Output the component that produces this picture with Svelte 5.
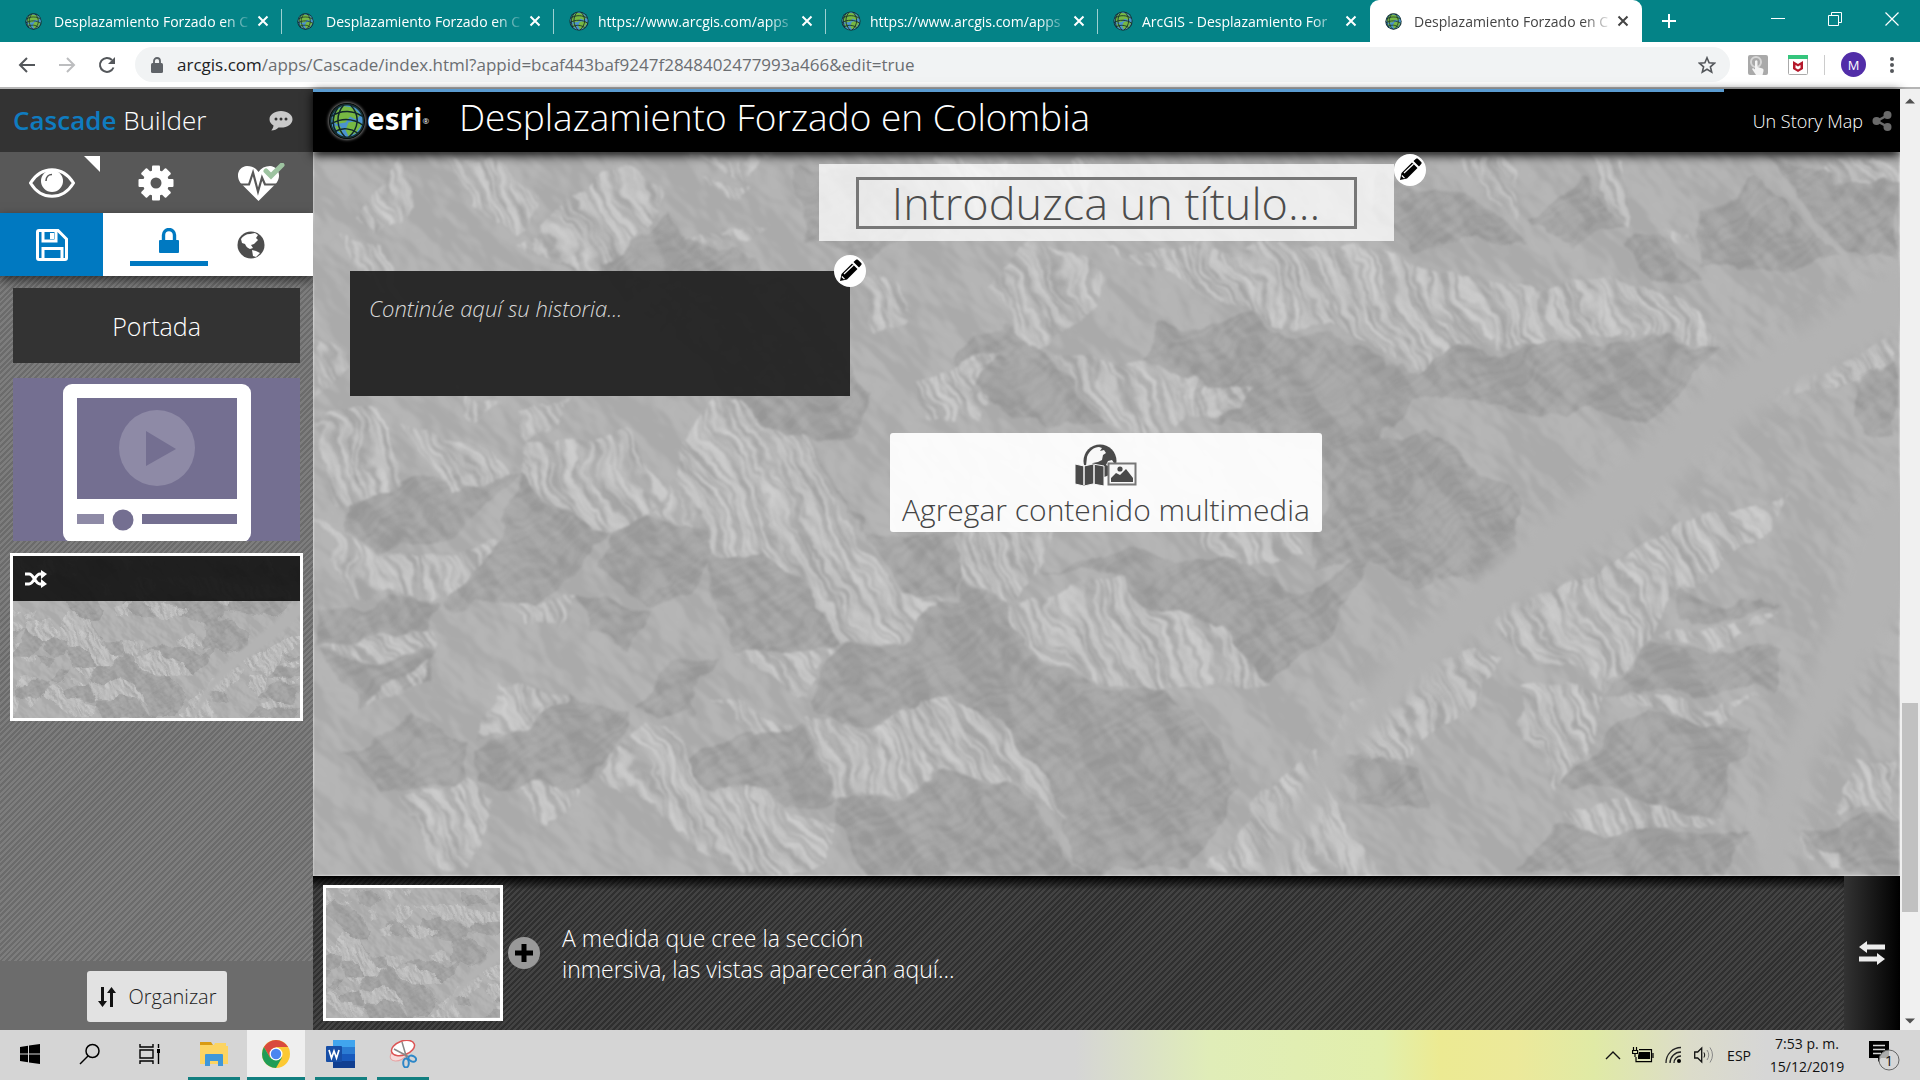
<script>
  const tabs = [
    { title: 'Desplazamiento Forzado en C', small: true },
    { title: 'Desplazamiento Forzado en C', small: true },
    { title: 'https://www.arcgis.com/apps' },
    { title: 'https://www.arcgis.com/apps' },
    { title: 'ArcGIS - Desplazamiento For' },
    { title: 'Desplazamiento Forzado en C', small: true, active: true },
  ];

  // Sunlit slopes of the relief map
  const lights = [
    '790,90 1000,95 1064,103 1135,125 1230,140 1290,126 1340,138 1372,155 1415,190 1340,190 1290,181 1232,190 1170,188 1145,200 1105,222 1075,205 1020,178 941,158 880,140 847,123',
    '674,131 720,95 797,131 790,158 732,191 703,171',
    '739,198 833,218 941,231 920,258 847,281 783,271',
    '127,5 170,1 235,41 213,85 156,58',
    '213,98 249,51 314,18 350,41 314,98 278,118',
    '19,85 69,95 98,158 60,130', '40,65 83,8 105,58 62,78',
    '365,5 487,1 430,22', '386,30 440,30 420,42', '379,78 458,81 422,95',
    '0,185 26,205 33,221 0,241', '0,270 60,260 90,330 20,350',
    '83,268 127,275 206,318 141,348', '141,245 170,271 190,250',
    '206,265 264,243 213,292', '540,120 590,130 600,165 560,180',
    '600,225 690,200 650,275 610,270',
    '214,291 286,291 306,281 347,335 339,361 306,378 281,381 235,341 209,321',
    '398,251 434,251 449,275 495,285 520,341 551,391 587,435 628,455 587,488 531,496 505,448 449,391 406,400 378,375 342,358 352,328',
    '0,368 31,391 66,411 122,401 184,391 179,411 133,446 77,446 41,435 20,405',
    '5,491 128,475 122,495 61,513', '638,381 735,381 735,418 699,455 645,425',
    '809,431 891,478 963,530 901,528 840,533 788,528 755,525 706,475 699,458 740,440',
    '628,541 653,548 699,578 724,615 755,671 709,638 622,618 587,638 531,640 510,601 485,561 541,585',
    '418,498 531,498 485,545', '398,548 480,568 439,581',
    '332,575 352,575 372,608 393,638 459,641 525,671 500,721 423,721 367,681 286,618',
    '92,645 153,628 184,645 148,715 122,708', '204,638 265,635 240,685',
    '189,451 265,448 250,475 200,470', '185,535 250,542 215,580 175,585',
    '40,560 112,515 100,545', '602,251 684,248 673,275', '880,378 935,345 970,370 1000,405 925,412',
    '1179,468 1282,415 1374,368 1477,341 1425,408 1374,435 1343,488 1297,541 1240,515',
    '1158,495 1189,508 1107,601 1066,615 1014,601 1045,548',
    '1004,601 1025,661 1066,721 901,721 953,645', '1374,475 1467,455 1405,491 1353,485',
    '1312,545 1415,555 1456,548 1384,571 1322,561',
    '1251,655 1333,648 1415,661 1333,683 1261,675',
    '1538,605 1585,611 1580,665 1518,658', '1487,685 1528,701 1538,724 1497,705',
    '1209,530 1297,545 1271,595 1240,641 1200,575',
    '1512,21 1558,5 1587,35 1524,30', '1466,245 1524,215 1587,185 1587,215 1531,238',
    '1351,75 1382,80 1385,94', '1150,8 1200,5 1208,70', '1275,10 1310,12 1318,80 1285,45',
    '620,5 690,10 660,60', '730,20 780,10 770,55',
  ];

  // Slopes in shadow
  const darks = [
    '941,160 1103,223 1145,200 1232,190 1415,192 1380,225 1320,270 1250,260 1105,245 1040,300 950,290 860,240 833,215 850,180',
    '213,98 278,120 340,170 420,248 440,285 540,280 560,240 500,170 470,130 350,60 314,98',
    '209,321 235,345 281,382 306,378 265,420 213,450 133,448 184,395',
    '339,363 378,375 405,400 380,445 330,455 295,420 306,378',
    '449,391 505,448 531,496 418,498 405,430 400,400',
    '645,428 699,458 735,510 755,528 800,535 860,533 930,640 880,724 770,724 720,610 690,570 640,540 560,575 530,580 490,550 531,498 587,490 628,455',
    '622,620 709,640 770,724 560,724 525,671 531,642 587,640',
    '265,448 330,460 315,500 280,490', '250,540 318,560 310,590 265,635 204,640 165,630 170,600',
    '5,495 61,515 122,498 110,540 40,560', '100,560 160,590 150,630 70,640 30,600',
    '485,570 531,642 500,650 393,638 372,608 430,580', '326,560 345,570 380,560 400,500 370,510',
    '40,320 130,330 209,321 150,370 66,409 20,380', '550,380 638,381 645,425 625,450 590,435 500,290',
    '1102,281 1140,300 1205,350 1210,400 1150,440 1060,410 1000,420 1010,290',
    '735,418 830,400 930,405 1000,440 1060,400 1020,480 960,527 890,478 809,431',
    '1217,65 1263,25 1313,78 1260,95', '1386,58 1443,28 1524,105 1390,118',
    '1313,92 1351,80 1390,128 1340,130', '1060,20 1160,40 1210,90 1100,105 1060,60',
    '1343,490 1467,495 1467,540 1300,545', '1300,570 1436,570 1415,658 1333,648 1251,628',
    '1240,672 1436,681 1415,724 1199,724', '1364,441 1467,450 1374,470',
    '1025,605 1107,618 1107,660 1045,650', '1487,678 1585,665 1587,724 1538,724',
    '1531,240 1587,215 1587,280 1560,275', '480,20 560,5 620,60 560,110 500,90',
    '703,173 732,192 783,271 690,260 640,200', '0,450 130,448 120,475 0,490', '1450,8 1512,22 1587,37 1587,110 1530,100',
  ];
</script>

{#snippet globe(size)}
  <svg width={size} height={size} viewBox="0 0 24 24" aria-hidden="true">
    <circle cx="12" cy="12" r="11.5" fill="#16302f" />
    <circle cx="12" cy="12" r="10.4" fill="#4b93cf" />
    <path d="M4 6l5-4 7 1 5 5-3 3-4-2-3 4-6 1-3-3zM13 13l6-1 3 2-4 6-5 2-2-4zM4 15l4 1 1 5-4-3z" fill="#77b843" />
    <g fill="none" stroke="#10262b" stroke-width="1">
      <path d="M10 1C4 8 5 17 11 23M14 1c7 7 6 16-1 22M1.500 9c7-5 15-4 21 0M1 14c7-4 15-4 22 1M4 19c5-3 11-2 15 1M6 3c-4 6-4 12-1 17" />
    </g>
  </svg>
{/snippet}

{#snippet pencil()}
  <svg width="24" height="24" viewBox="0 0 24 24" aria-hidden="true">
    <path d="M2 22l1.500-7L14 4.500 19.500 10 9 20.500z" /><path d="M15.500 3L18 .8c.6-.5 1.300-.5 1.900 0l3.300 3.300c.6.600.6 1.300 0 1.900L21 8.500z" />
    <path d="M3.800 17.500l2.700 2.700M6 15L15.500 6" stroke="#fff" stroke-width="1.200" fill="none" />
  </svg>
{/snippet}

{#snippet relief()}
  <svg class="relief" viewBox="0 0 1587 724" preserveAspectRatio="xMidYMid slice" aria-hidden="true"><use href="#relief-map" /></svg>
{/snippet}

<svg class="defs" width="0" height="0" aria-hidden="true">
  <defs>
    <filter id="ridge" x="0" y="0" width="1587" height="724" filterUnits="userSpaceOnUse" color-interpolation-filters="sRGB">
      <feTurbulence type="fractalNoise" baseFrequency="0.016" numOctaves="4" seed="4" result="n" />
      <feDisplacementMap in="SourceGraphic" in2="n" scale="38" xChannelSelector="R" yChannelSelector="G" result="d" />
      <feGaussianBlur in="d" stdDeviation="1" />
    </filter>
    <filter id="rock" x="-500" y="-500" width="2600" height="1900" filterUnits="userSpaceOnUse" color-interpolation-filters="sRGB">
      <feTurbulence type="fractalNoise" baseFrequency="0.009 0.016" numOctaves="4" seed="11" />
      <feDiffuseLighting surfaceScale="36" lighting-color="#fff"><feDistantLight azimuth="120" elevation="30" /></feDiffuseLighting>
      <feGaussianBlur stdDeviation="1" />
    </filter>
    <filter id="gully" x="-600" y="-700" width="2800" height="2200" filterUnits="userSpaceOnUse" color-interpolation-filters="sRGB">
      <feTurbulence type="fractalNoise" baseFrequency="0.012 0.07" numOctaves="3" seed="7" />
      <feDiffuseLighting surfaceScale="8" lighting-color="#fff"><feDistantLight azimuth="90" elevation="30" /></feDiffuseLighting>
    </filter>
    <filter id="soft"><feGaussianBlur stdDeviation="8" /></filter>
    <clipPath id="sunlit">
      {#each lights as points}<polygon {points} />{/each}
    </clipPath>
    <clipPath id="shaded">
      {#each darks as points}<polygon {points} />{/each}
    </clipPath>
    <clipPath id="frame"><rect width="1587" height="724" /></clipPath>
    <g id="relief-map" clip-path="url(#frame)">
      <g filter="url(#ridge)">
        <rect x="-60" y="-60" width="1707" height="844" fill="#b0b0b0" />
        <g fill="#a4a4a4">{#each darks as points}<polygon {points} />{/each}</g>
        <g fill="#c3c3c3">{#each lights as points}<polygon {points} />{/each}</g>
        <g clip-path="url(#shaded)"><g class="faint">
          <g transform="rotate(150 800 360)"><rect x="-600" y="-700" width="2800" height="2200" filter="url(#gully)" /></g>
        </g></g>
        <g clip-path="url(#sunlit)"><g class="gullies">
          <g transform="rotate(62 800 360)"><rect x="-600" y="-700" width="2800" height="2200" filter="url(#gully)" /></g>
        </g></g>
      </g>
      <g class="rocks"><g transform="rotate(40 800 360)"><rect x="-500" y="-500" width="2600" height="1900" filter="url(#rock)" /></g></g>
      <g fill="#b3b3b3" filter="url(#soft)">
        <path d="M1600 100L1500 170 1415 215 1330 290 1210 385 1100 480 1020 580 940 730H960L1040 600 1160 485 1330 365 1430 270 1600 170z" />
        <path d="M1600 310L1550 370 1500 520 1460 620 1440 730H1470L1500 610 1560 500 1600 440z" />
      </g>
    </g>
  </defs>
</svg>

<div class="screen">
  <header class="tabs">
    <nav class="tablist" aria-label="Pestañas">
      {#each tabs as tab}
        <div class="tab" class:active={tab.active}>
          <span class="fav">{@render globe(tab.small ? 17 : 20)}</span>
          <a href="#main" class="tab-title">{tab.title}</a>
          <button class="x" aria-label="Cerrar pestaña">
            <svg width="12" height="12" viewBox="0 0 12 12"><path d="M1.500 1.500l9 9m0-9l-9 9" stroke="currentColor" stroke-width="2" /></svg>
          </button>
        </div>
      {/each}
      <button class="newtab" aria-label="Nueva pestaña">
        <svg width="16" height="16" viewBox="0 0 16 16"><path d="M8 1v14M1 8h14" stroke="#fff" stroke-width="2" /></svg>
      </button>
    </nav>
    <div class="win">
      <button aria-label="Minimizar"><svg width="14" height="14" viewBox="0 0 14 14"><path d="M0 6.500h14" stroke="#fff" /></svg></button>
      <button aria-label="Restaurar"><svg width="14" height="14" viewBox="0 0 14 14" fill="none" stroke="#fff"><path d="M.5 3.500h10v10H.5zM3.500 3V.5h10v10H11" /></svg></button>
      <button aria-label="Cerrar"><svg width="14" height="14" viewBox="0 0 14 14"><path d="M.5.5l13 13m0-13l-13 13" stroke="#fff" stroke-width="1.200" /></svg></button>
    </div>
  </header>

  <div class="toolbar">
    <button aria-label="Atrás"><svg width="18" height="18" viewBox="0 0 18 18" fill="none" stroke="#54575b" stroke-width="2"><path d="M17 9H2M9 2L2 9l7 7" /></svg></button>
    <button aria-label="Adelante"><svg width="18" height="18" viewBox="0 0 18 18" fill="none" stroke="#bcbdbf" stroke-width="2"><path d="M1 9h15M9 2l7 7-7 7" /></svg></button>
    <button aria-label="Recargar"><svg width="18" height="18" viewBox="0 0 18 18"><path d="M15.500 11.500A7 7 0 1 1 14 4" fill="none" stroke="#54575b" stroke-width="2" /><path d="M17 1v7h-7z" fill="#54575b" /></svg></button>
    <div class="omni">
      <svg width="12" height="16" viewBox="0 0 12 16"><rect y="6" width="12" height="10" rx="1.500" fill="#5f6368" /><path d="M3 7V4a3 3 0 0 1 6 0v3" fill="none" stroke="#5f6368" stroke-width="1.800" /></svg>
      <a href="#main" class="url"><b>arcgis.com</b>/apps/Cascade/index.html?appid=bcaf443baf9247f2848402477993a466&amp;edit=true</a>
      <button class="star" aria-label="Marcador"><svg width="18" height="18" viewBox="0 0 18 18"><path d="M9 1.800l2.100 5 5.400.4-4.100 3.600 1.300 5.300L9 13.300l-4.700 2.800 1.300-5.300L1.500 7.200l5.400-.4z" fill="none" stroke="#54575b" stroke-width="1.600" /></svg></button>
    </div>
    <div class="exts">
      <button aria-label="Extensión táctil"><svg width="20" height="20" viewBox="0 0 20 20"><rect width="20" height="20" rx="2" fill="#a9a9a9" /><circle cx="8" cy="7" r="5" fill="none" stroke="#d6d6d6" stroke-width="2" /><path d="M7 6q1.500-1.500 2.500 0v6l5 1.500q1.500.5 1 2.500l-1 4H8l-4-6 1-1 2 1.500z" fill="#f4f4f4" /></svg></button>
      <button aria-label="McAfee"><svg width="20" height="20" viewBox="0 0 20 20"><rect x=".5" y=".5" width="19" height="19" rx="1" fill="#fff" stroke="#aaa" /><path d="M0 0h20v4H0z" fill="#35c57d" /><path d="M5 6l5 3 5-3v8l-5 3-5-3zM7.500 10v3l2.500 1.500 2.500-1.500v-3L10 11.500z" fill="#b5182b" fill-rule="evenodd" /></svg></button>
      <i></i>
      <button class="avatar" aria-label="Perfil">M</button>
      <button aria-label="Menú"><svg width="4" height="18" viewBox="0 0 4 18" fill="#54575b"><circle cx="2" cy="3" r="2" /><circle cx="2" cy="9" r="2" /><circle cx="2" cy="15" r="2" /></svg></button>
    </div>
  </div>

  <div class="app">
    <aside>
      <div class="brand">
        <h2><b>Cascade</b> Builder</h2>
        <button aria-label="Comentarios"><svg width="24" height="22" viewBox="0 0 24 22"><path d="M12 1C5.500 1 .5 4.700.5 9.300c0 2.700 1.500 4.800 4 6.300-.2 2-1 3.600-2.200 4.800 3 0 5.500-1.200 7.200-3 .8.100 1.600.2 2.500.2 6.500 0 11.500-3.700 11.500-8.300S18.500 1 12 1z" fill="#c9c9c9" /><g fill="#333"><circle cx="7" cy="9" r="1.500" /><circle cx="12" cy="9" r="1.500" /><circle cx="17" cy="9" r="1.500" /></g></svg></button>
      </div>
      <div class="tools">
        <button aria-label="Vista previa">
          <svg width="46" height="30" viewBox="0 0 46 30"><path d="M1.500 15C7 6 14 1.700 23 1.700S39 6 44.500 15C39 24 32 28.300 23 28.300S7 24 1.500 15z" fill="none" stroke="#fff" stroke-width="3" /><circle cx="23" cy="13" r="11" fill="#fff" /><path d="M17 13c0-4 2.500-6.500 6-6.500" fill="none" stroke="#585858" stroke-width="1.600" /></svg>
          <svg class="corner" width="16" height="16" viewBox="0 0 16 16"><path d="M0 0h16v16z" fill="#fff" /></svg>
        </button>
        <button aria-label="Configuración">
          <svg width="36" height="36" viewBox="-18 -18 36 36"><g fill="#fff">{#each [0, 45, 90, 135] as a}<rect x="-4" y="-17.500" width="8" height="35" rx="1" transform="rotate({a})" />{/each}<circle r="13" /></g><circle r="5.500" fill="#585858" /></svg>
        </button>
        <button aria-label="Estado">
          <svg width="50" height="40" viewBox="0 0 50 40"><path d="M22.500 38L4.500 20C-1 12 3 3.500 11 3c5 0 9 2 11.500 6C25 5 29 3 34 3c8 .5 12 9 6.500 17z" fill="#fff" /><path d="M2 21.500h11l4-12 5 19 4-14 3 7h13" fill="none" stroke="#585858" stroke-width="2.200" /><path d="M30 8l5 5L46 2" fill="none" stroke="#9dc3a0" stroke-width="5" stroke-linecap="round" /></svg>
        </button>
      </div>
      <div class="share">
        <button class="save" aria-label="Guardar"><svg width="32" height="32" viewBox="0 0 32 32" fill="none" stroke="#fff" stroke-width="3"><path d="M3 1.500h19L30.500 10v19q0 1.500-1.500 1.500H3Q1.500 30.500 1.500 29V3Q1.500 1.500 3 1.500z" /><path d="M7 30V19.500h19V30M7 2v10h13V2" /><path d="M16 4v6" stroke-width="4" /></svg></button>
        <button class="lock" aria-label="Privado"><svg width="20" height="26" viewBox="0 0 20 26"><rect y="12" width="20" height="13" rx="1" fill="#0079c1" /><path d="M4.500 13V7a5.500 5.500 0 0 1 11 0v6" fill="none" stroke="#0079c1" stroke-width="3.400" /></svg></button>
        <button class="world" aria-label="Público"><svg width="28" height="28" viewBox="0 0 28 28"><circle cx="14" cy="14" r="13.500" fill="#4d4d4d" /><path d="M4 8c2-3 5-5 9-5l5-1 3 2-2 3 2 2-4 4-3 1 2 3-3 1c-3-1-4-3-5-5l-3-1zM15 19l4 1 4 2-4 4-3-1z" fill="#fff" /></svg></button>
      </div>
      <div class="sections">
        <button class="cover">Portada</button>
        <button class="video" aria-label="Sección de vídeo">
          <svg viewBox="0 0 287 163"><rect width="287" height="163" fill="#746f91" /><rect x="50" y="6" width="188" height="158" rx="9" fill="#fff" /><path d="M64 20h160v101H64z" fill="#746f91" /><circle cx="144" cy="70" r="38" fill="#8e8aa6" /><path d="M133 53v35l30-17z" fill="#746f91" /><path d="M64 136h27v10H64z" fill="#8e8aa6" /><path d="M129 136h95v10h-95z" fill="#746f91" /><circle cx="110" cy="142" r="10.500" fill="#746f91" /></svg>
        </button>
        <button class="immersive" aria-label="Sección inmersiva">
          {@render relief()}
          <span><svg width="22" height="18" viewBox="0 0 22 18" fill="none" stroke="#fff" stroke-width="3"><path d="M0 4h4c5 0 6 10 11 10h2M0 14h4c5 0 6-10 11-10h2" /><path d="M16 0l6 4-6 5zM16 9l6 5-6 4z" fill="#fff" stroke="none" /></svg></span>
        </button>
      </div>
      <div class="organize">
        <button><svg width="20" height="22" viewBox="0 0 20 22" fill="#111"><path d="M4 1h3v14h3l-4.500 6L1 15h3zM13 21h3V7h3l-4.500-6L10 7h3z" /></svg>Organizar</button>
      </div>
    </aside>

    <main id="main">
      <div class="bar">
        <a href="#main" class="esri" aria-label="esri">{@render globe(36)}<b>esri</b><sup>®</sup></a>
        <h1>Desplazamiento Forzado en Colombia</h1>
        <a href="#main" class="story-link">Un Story Map</a>
        <button aria-label="Compartir"><svg width="20" height="20" viewBox="0 0 20 20" fill="#6a6a6a"><path d="M16 4L5 10l11 6" fill="none" stroke="#6a6a6a" stroke-width="2.500" /><circle cx="15.500" cy="4" r="4" /><circle cx="4.500" cy="10" r="4" /><circle cx="15.500" cy="16" r="4" /></svg></button>
      </div>
      <section class="stage">
        {@render relief()}
        <div class="content">
          <div class="title-box">
            <input aria-label="Título" placeholder="Introduzca un título..." />
            <button class="edit" aria-label="Editar título">{@render pencil()}</button>
          </div>
          <div class="story">
            <textarea aria-label="Historia" placeholder="Continúe aquí su historia..."></textarea>
            <button class="edit" aria-label="Editar historia">{@render pencil()}</button>
          </div>
          <button class="media">
            <svg width="62" height="42" viewBox="0 0 62 42"><circle cx="25" cy="17" r="16.500" fill="#4a4a4a" /><path d="M12 13c2-6 7-10 12-10l3 1-2 3 4-1 2 3-3 2-1 5-4 2-5 1-3 3h-4zM33 17l4-1 2 3-4 4-4-2z" fill="#f8f8f8" /><path d="M0 20l9 2 9-2 11 2v20l-11-2-9 2-9-2z" fill="#4a4a4a" stroke="#f8f8f8" stroke-width="1" /><path d="M9 21v20M19 21v20" stroke="#f8f8f8" stroke-width="1.500" /><rect x="33.500" y="19.500" width="27" height="21" fill="#f8f8f8" stroke="#777" stroke-width="2" /><path d="M36 38v-4l5-5 4 2 6-6 7 9v4z" fill="#4a4a4a" /><circle cx="45" cy="25" r="2.600" fill="#4a4a4a" /></svg>
            Agregar contenido multimedia
          </button>
        </div>
      </section>
      <section class="views">
        <button class="thumb" aria-label="Vista 1">{@render relief()}</button>
        <button class="add" aria-label="Agregar vista"><svg width="18" height="18" viewBox="0 0 18 18"><path d="M9 0v18M0 9h18" stroke="#000" stroke-width="5" /></svg></button>
        <p>A medida que cree la sección<br />inmersiva, las vistas aparecerán aquí...</p>
        <button class="swap" aria-label="Cambiar orden"><svg width="26" height="26" viewBox="0 0 26 26" fill="#ececec"><path d="M0 7l8-6v3.500h18v5H8V13zM26 19l-8-6v3.500H0v5h18V25z" /></svg></button>
      </section>
    </main>

    <div class="scroll" aria-hidden="true">
      <svg width="10" height="6" viewBox="0 0 10 6"><path d="M0 5.500L5 .5l5 5z" fill="#505050" /></svg>
      <div class="track"><i></i></div>
      <svg width="10" height="6" viewBox="0 0 10 6"><path d="M0 .5l5 5 5-5z" fill="#505050" /></svg>
    </div>
  </div>

  <footer>
    <div class="apps">
      <button class="plain" aria-label="Inicio"><svg width="20" height="20" viewBox="0 0 20 20"><path d="M0 3l8-1.200V9.500H0zM9 1.600L20 0v9.500H9zM0 10.500h8v7.700L0 17zM9 10.500h11V20L9 18.400z" /></svg></button>
      <button class="plain" aria-label="Buscar"><svg width="22" height="22" viewBox="0 0 22 22" fill="none" stroke="#000" stroke-width="1.500"><circle cx="13.500" cy="8" r="6.500" /><path d="M9 13l-8 8" /></svg></button>
      <button class="plain" aria-label="Vista de tareas"><svg width="22" height="20" viewBox="0 0 22 20" fill="none" stroke="#000" stroke-width="1.400"><path d="M1 0v3h13V0M1 20v-3h13v3M1 6h13v8H1zM19.500 0v4M19.500 9v11" /><path d="M19.500 5v4" stroke-width="3" /></svg></button>
      <button aria-label="Explorador"><svg width="28" height="26" viewBox="0 0 28 26"><path d="M0 1h11l2 3H0z" fill="#d99b12" /><path d="M0 4h14l1-2h11v3h2v18H0z" fill="#fcd462" /><path d="M5 25V14q0-1 1-1h16q1 0 1 1v11h-5v-5h-8v5z" fill="#3f97d9" /></svg></button>
      <button class="current" aria-label="Chrome"><svg width="28" height="28" viewBox="-14 -14 28 28"><circle r="14" fill="#fcc934" /><path d="M-12.100-7A14 14 0 0 1 12.100-7H0L-6 3.500z" fill="#d94a3d" /><path d="M-12.100-7A14 14 0 0 0 0 14L6 3.500-6 3.500z" fill="#1f9d57" /><circle r="6.500" fill="#fff" /><circle r="5.200" fill="#4a86f0" /></svg></button>
      <button aria-label="Word"><svg width="30" height="28" viewBox="0 0 30 28"><path d="M7 0h22v7H7z" fill="#41a5ee" /><path d="M7 7h22v7H7z" fill="#2b7cd3" /><path d="M7 14h22v7H7z" fill="#185abd" /><path d="M7 21h22v7H7z" fill="#103f91" /><rect y="6" width="16" height="16" rx="1" fill="#174ea6" /><path d="M3 10l2.500 8L8 11l2.500 7L13 10" fill="none" stroke="#fff" stroke-width="1.700" /></svg></button>
      <button aria-label="Recortes"><svg width="28" height="28" viewBox="0 0 28 28" fill="none"><ellipse cx="10" cy="14" rx="9.500" ry="6" transform="rotate(-30 10 14)" fill="#f6dada" stroke="#e6a3a3" /><ellipse cx="14" cy="8" rx="12" ry="7" transform="rotate(-20 14 8)" fill="#fff" stroke="#dc5555" stroke-width="1.500" /><path d="M13 2l5 17M5 9l15 8" stroke="#888" stroke-width="1.500" /><ellipse cx="17" cy="23" rx="2.800" ry="4.500" stroke="#2d87c8" stroke-width="2" /><ellipse cx="23.500" cy="18.500" rx="4" ry="2.800" transform="rotate(25 23 18)" stroke="#2d87c8" stroke-width="2" /></svg></button>
    </div>
    <div class="tray">
      <button aria-label="Iconos ocultos"><svg width="16" height="10" viewBox="0 0 16 10"><path d="M1 9l7-7 7 7" fill="none" stroke="#111" stroke-width="1.400" /></svg></button>
      <button aria-label="Batería"><svg width="22" height="16" viewBox="0 0 22 16"><path d="M7 5h11v7H6V9z" /><path d="M7 2.600h12.500v12H4V10M21 6v5M1.500 0v3M4.500 0v3M.6 3.500h5v3h-5zM3 6v4" fill="none" stroke="#000" stroke-width="1.200" /></svg></button>
      <button aria-label="Wi-Fi"><svg width="18" height="18" viewBox="0 0 18 18" fill="none" stroke="#222"><path d="M1 17C1 8 8 1.500 16 1.500M5 17c0-6 5-11 11-11M9 17c0-4 3-7 7-7" stroke-width="1.300" /><circle cx="14" cy="15" r="2" fill="#000" stroke="none" /></svg></button>
      <button aria-label="Volumen"><svg width="20" height="18" viewBox="0 0 20 18" fill="none" stroke="#111"><path d="M.7 6h3l4-4v14l-4-4h-3z" stroke-width="1.300" /><path d="M10 6.500q1.500 2.500 0 5" /><path d="M13 4q3.500 5 0 10M16 1.500q5 7.500 0 15" stroke="#888" /></svg></button>
      <button class="lang">ESP</button>
      <button class="clock"><span>7:53 p. m.</span><span>15/12/2019</span></button>
      <button class="notes" aria-label="Notificaciones"><svg width="32" height="32" viewBox="0 0 32 32"><path d="M0 2h20v17h-8l-3 4v-4H0z" /><path d="M4 6.500h12M4 10.500h12M4 14.500h8" stroke="#d6d6d6" stroke-width="1.300" /><circle cx="20" cy="21" r="10" fill="#d6d6d6" fill-opacity=".8" stroke="#666" /></svg><em>1</em></button>
    </div>
  </footer>
</div>

<style>
  :global(body) { margin: 0; }
  :global(#app) { min-height: 100vh; }
  * { box-sizing: border-box; }
  .screen { display: flex; flex-direction: column; min-height: 100vh; font-family: "Open Sans", "Noto Sans", sans-serif; }
  .defs { position: absolute; }
  button { border: 0; padding: 0; margin: 0; background: none; font: inherit; color: inherit; display: flex; align-items: center; justify-content: center; }
  a { color: inherit; text-decoration: none; }
  h1, h2, p { margin: 0; font-weight: 300; }
  svg { flex: none; display: block; }

  .tabs { height: 42px; background: #048387; display: flex; justify-content: space-between; color: #fff; }
  .tablist { display: flex; padding-left: 10px; }
  .tab { width: 272px; display: flex; align-items: center; padding: 0 13px 0 15px; position: relative; font-size: 14px; }
  .tab:not(.active)::after { content: ""; position: absolute; right: 0; top: 9px; height: 25px; width: 1px; background: #9cd0d1; }
  .tab:nth-child(5)::after { display: none; }
  .tab.active { background: #fff; color: #444; border-radius: 9px 9px 0 0; }
  .fav { width: 20px; display: flex; }
  .tab-title { flex: 1; margin-left: 9px; white-space: nowrap; -webkit-mask-image: linear-gradient(90deg, #000 85%, #0003 97%); mask-image: linear-gradient(90deg, #000 85%, #0003 97%); }
  .x { margin-left: 4px; }
  .newtab { width: 54px; }
  .win { display: flex; }
  .win button { width: 57px; height: 38px; }

  .toolbar { height: 47px; background: #fff; border-bottom: 2px solid #b5b5b5; display: flex; align-items: center; padding-left: 7px; }
  .toolbar > button { width: 40px; }
  .omni { flex: 1; min-width: 0; height: 35px; border-radius: 18px; background: #f1f3f4; display: flex; align-items: center; margin-left: 8px; padding: 0 14px 0 16px; }
  .url { flex: 1; margin-left: 14px; font-size: 17px; color: #6b6e72; white-space: nowrap; overflow: hidden; }
  .url b { font-weight: 400; color: #202124; }
  .exts { display: flex; align-items: center; gap: 16px; padding: 0 26px 0 18px; }
  .exts i { width: 1px; height: 20px; background: #ccc; }
  .exts button:nth-child(2) { margin-left: 4px; }
  .avatar { width: 25px; height: 25px; border-radius: 50%; background: #512da8; color: #fff; font-size: 13px; }
  .exts button:last-child { margin-left: 8px; }

  .app { flex: 1; display: flex; }
  aside { width: 313px; display: flex; flex-direction: column; color: #fff; background: repeating-linear-gradient(135deg, #6b6b6b 0 2px, #7d7d7d 2px 4px); }
  .brand { height: 63px; background: #333; display: flex; align-items: center; justify-content: space-between; padding: 0 20px 0 13px; }
  .brand h2 { font-size: 26px; line-height: 36px; padding-bottom: 2px; }
  .brand b { color: #0f7cc0; font-weight: 600; }
  .tools { height: 61px; background: #585858; display: grid; grid-template-columns: 1fr 1fr 1fr; }
  .tools button { position: relative; }
  .corner { position: absolute; right: 4px; top: 4px; }
  .share { height: 63px; background: #fff; display: grid; grid-template-columns: 103px 132px 1fr; box-shadow: 0 4px 10px #0009; }
  .save { background: #0079c1; }
  .lock { margin: 0 27px; border-bottom: 5px solid #0079c1; height: 53px; padding-top: 8px; }
  .world { justify-content: flex-start; padding-left: 2px; }
  .sections { flex: 1; padding: 12px 10px; display: flex; flex-direction: column; gap: 12px; }
  .cover { margin: 0 3px; height: 75px; background: #333; font-size: 25px; font-weight: 300; }
  .video { margin: 3px 3px 0; }
  .video svg { width: 100%; }
  .immersive { border: 3px solid #fff; height: 168px; display: grid; overflow: hidden; }
  .immersive span { grid-area: 1/1; height: 45px; align-self: start; background: #111111e8; padding: 14px 12px; z-index: 1; }
  .relief { grid-area: 1/1; width: 100%; height: 100%; min-height: 0; isolation: isolate; }
  .gullies { opacity: .12; }
  .faint { opacity: .03; }
  .gullies, .faint, .rocks { mix-blend-mode: overlay; }
  .rocks { opacity: .08; }
  .organize { height: 69px; background: #6c6c6c; display: flex; justify-content: center; align-items: flex-start; padding-top: 10px; }
  .organize button { height: 51px; padding: 0 10px; gap: 12px; border-radius: 3px; background: #e2e2e2; color: #222; font-size: 20px; font-weight: 300; }

  main { flex: 1; min-width: 0; display: flex; flex-direction: column; }
  .bar { height: 63px; background: linear-gradient(90deg, #5a9bd0 88.900%, #000 88.900%) 0 0 / 100% 3px no-repeat #000; color: #fff; display: flex; align-items: center; padding: 0 8px 0 16px; z-index: 1; box-shadow: 0 3px 10px #000; }
  .esri { display: flex; align-items: center; width: 130px; }
  .esri svg { border-radius: 50%; box-shadow: 0 0 3px 1px #ddd8; }
  .esri b { font-size: 30px; line-height: 34px; margin: 0 0 4px 2px; }
  .esri sup { font-size: 8px; }
  .bar h1 { flex: 1; font-size: 37px; line-height: 50px; padding-bottom: 8px; }
  .story-link { font-size: 18px; font-weight: 300; margin-right: 9px; }
  .stage { flex: 1; display: grid; min-height: 724px; }
  .content { grid-area: 1/1; z-index: 1; display: flex; flex-direction: column; align-items: center; padding: 12px 38px 12px 37px; }
  .title-box { position: relative; width: 575px; height: 77px; background: #ffffffc4; padding: 13px 37px; }
  .title-box input { width: 100%; height: 52px; border: 3px solid #777; background: none; text-align: center; font: 300 45px/46px "Open Sans", sans-serif; padding: 0 0 2px; }
  input::placeholder { color: #4c4c4c; opacity: 1; }
  .edit { position: absolute; right: -32px; top: -10px; width: 32px; height: 32px; border-radius: 50%; background: #fff; }
  .story { position: relative; align-self: flex-start; width: 500px; height: 125px; margin-top: 30px; background: #222222f2; }
  .story .edit { right: -16px; top: -16px; }
  .story textarea { display: block; width: 100%; height: 100%; border: 0; resize: none; background: none; padding: 19px; font: italic 300 22px/36px "Open Sans", sans-serif; }
  textarea::placeholder { color: #d8d8d8; opacity: 1; }
  .media { margin-top: 37px; width: 432px; height: 99px; padding-top: 8px; background: #fffffff0; border-radius: 3px; flex-direction: column; font-size: 30px; line-height: 40px; font-weight: 300; color: #444; gap: 4px; white-space: nowrap; }

  .views { height: 154px; display: flex; align-items: center; padding-left: 10px; background: linear-gradient(#000, transparent 14px), repeating-linear-gradient(135deg, #2f2f2f 0 2px, #434343 2px 4px); color: #fff; }
  .thumb { width: 180px; height: 136px; border: 3px solid #fff; display: grid; overflow: hidden; }
  .add { width: 32px; height: 32px; border-radius: 50%; background: #999; margin-left: 5px; }
  .views p { flex: 1; margin-left: 22px; font-size: 23px; line-height: 31px; padding-top: 2px; }
  .swap { width: 56px; align-self: stretch; background: linear-gradient(90deg, #333, #000); }

  .scroll { width: 20px; background: #f0f0f0; display: flex; flex-direction: column; align-items: center; padding: 9px 0 6px; z-index: 2; }
  .track { flex: 1; width: 16px; display: flex; flex-direction: column; }
  .track::before { content: ""; flex: 603; }
  .track i { flex: 210; background: #c1c1c1; }
  .track::after { content: ""; flex: 107; }

  footer { height: 50px; display: flex; justify-content: space-between; color: #111; background: linear-gradient(90deg, #d5d5d5 56%, #e0edb8 63%, #e2efac 72%, #ecea92 75%, #ece99a 79%, #e0eaa5 83%, #dcdcca 88%, #d6d6d6 92%); }
  .apps { display: flex; gap: 10px; }
  .apps button { width: 52px; border-bottom: 3px solid #127f80; }
  .apps .plain { width: 60px; margin-right: -10px; border-color: transparent; }
  .apps .plain + button:not(.plain) { margin-left: 8px; }
  .apps .current { width: 58px; background: #efefef; margin-left: -3px; }
  .tray { display: flex; align-items: center; padding-right: 19px; gap: 11px; font-size: 14px; }
  .tray .lang { margin-left: 2px; }
  .clock { flex-direction: column; line-height: 23px; width: 90px; }
  .notes { position: relative; margin-left: 6px; }
  .notes em { position: absolute; right: 8px; bottom: 1px; font-style: normal; }
</style>
